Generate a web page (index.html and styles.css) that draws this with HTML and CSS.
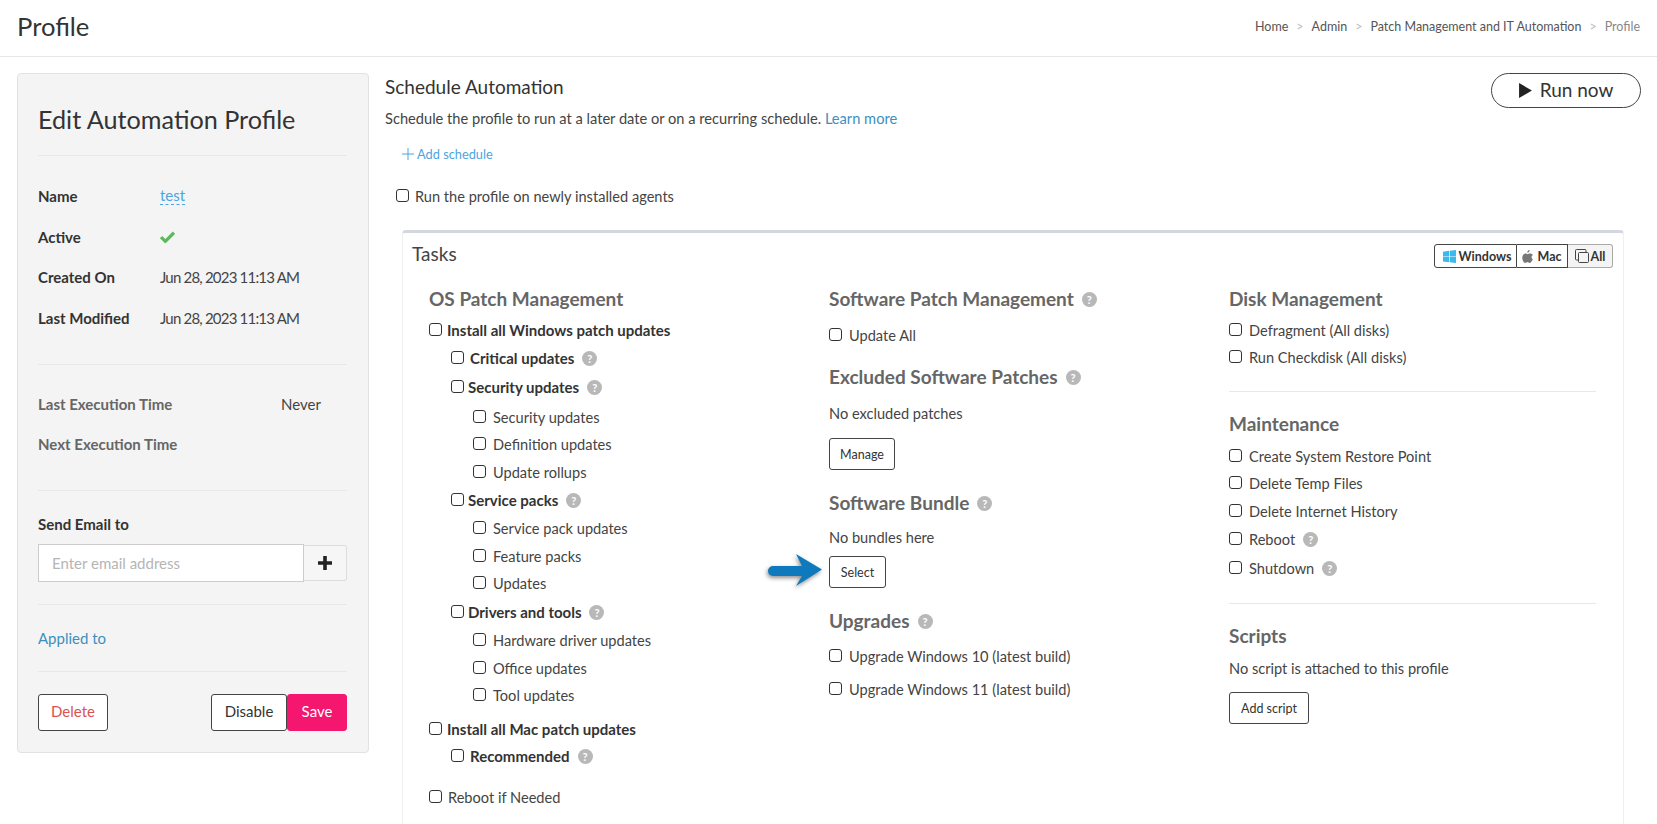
FILE: index.html
```html
<!DOCTYPE html>
<html>
    <head>
        <title>Profile</title>
        <meta charset="utf-8" />
        <link rel="stylesheet" href="styles.css">
    </head>
    <body>
        <header class="topbar">
            <h1>Profile</h1>
            <nav class="crumbs">
                <a>Home</a><span class="sep">&gt;</span>
                <a>Admin</a><span class="sep">&gt;</span>
                <a>Patch Management and IT Automation</a><span class="sep">&gt;</span>
                <span class="current">Profile</span>
            </nav>
        </header>

        <main class="layout">
            <aside class="panel">
                <h2>Edit Automation Profile</h2>
                <hr class="first-rule">
                <div class="info"><b>Name</b><a class="editable">test</a></div>
                <div class="info">
                    <b>Active</b>
                    <svg class="tick" viewBox="0 0 14 12"><path d="M1 6.5l4 4L13 2.5" fill="none" stroke="#5cb85c" stroke-width="3"/></svg>
                </div>
                <div class="info"><b>Created On</b><span class="date">Jun 28, 2023 11:13 AM</span></div>
                <div class="info"><b>Last Modified</b><span class="date">Jun 28, 2023 11:13 AM</span></div>
                <hr class="rule-exec">
                <div class="info muted"><b>Last Execution Time</b><span class="never">Never</span></div>
                <div class="info muted"><b>Next Execution Time</b></div>
                <hr class="rule-email">
                <label class="email-label">Send Email to</label>
                <div class="email-group">
                    <input type="text" placeholder="Enter email address">
                    <button class="add-btn"><svg viewBox="0 0 14 14"><path d="M5.2 0h3.6v5.2H14v3.6H8.8V14H5.2V8.8H0V5.2h5.2z" fill="#222"/></svg></button>
                </div>
                <hr class="rule-applied">
                <a class="applied">Applied to</a>
                <hr class="rule-actions">
                <div class="actions">
                    <button class="btn btn-delete">Delete</button>
                    <div class="actions-right">
                        <button class="btn btn-disable">Disable</button>
                        <button class="btn btn-save">Save</button>
                    </div>
                </div>
            </aside>

            <section class="content">
                <div class="content-head">
                    <h3>Schedule Automation</h3>
                    <button class="run-now">
                        <svg viewBox="0 0 12 14"><path d="M0 0l12 7-12 7z" fill="#222"/></svg>
                        <span>Run now</span>
                    </button>
                </div>
                <p class="lead">Schedule the profile to run at a later date or on a recurring schedule. <a>Learn more</a></p>
                <a class="add-schedule"><svg viewBox="0 0 12 12"><path d="M6 0v12M0 6h12" stroke="#4ca5e0" stroke-width="1" fill="none"/></svg>Add schedule</a>
                <label class="row new-agents"><input type="checkbox">Run the profile on newly installed agents</label>

                <div class="tasks">
                    <div class="tasks-head">
                        <h4>Tasks</h4>
                        <div class="os-filter">
                            <button class="seg seg-win">
                                <svg viewBox="0 0 12 12"><path d="M0 1.500L5.600 .8v4.900H0zM6.200 .7L12 0v5.700H6.200zM0 6.300h5.600v4.900L0 10.500zM6.200 6.300H12V12l-5.800-.7z" fill="#3bb8ee"/></svg>Windows
                            </button>
                            <button class="seg seg-mac">
                                <svg viewBox="0 0 12 14"><path d="M8.3 0c.1 1.400-1 2.800-2.500 2.900C5.700 1.500 6.900.2 8.300 0zM11.600 10.200c-.7 1.700-2 3.800-3.300 3.800-.9 0-1.300-.6-2.400-.6s-1.600.6-2.400.6C2 14 .3 10.900.3 8.300c0-2.800 1.800-4.500 3.500-4.500 1 0 1.800.7 2.400.7s1.500-.8 2.700-.7c.6 0 2.100.2 3 1.600-2.200 1.400-1.800 4 .3 4.800z" fill="#777"/></svg>Mac
                            </button>
                            <button class="seg seg-all">
                                <svg viewBox="0 0 14 14"><path d="M3.500 11H1.500A1 1 0 0 1 .5 10V1.500A1 1 0 0 1 1.500.5H10a1 1 0 0 1 1 1v2" fill="none" stroke="#444"/><rect x="3.500" y="3.500" width="10" height="10" rx="1" fill="none" stroke="#444"/></svg>All
                            </button>
                        </div>
                    </div>

                    <div class="task-columns">
                        <div class="col">
                            <h5>OS Patch Management</h5>
                            <label class="row strong first"><input type="checkbox">Install all Windows patch updates</label>
                            <label class="row strong lvl1 wide"><input type="checkbox">Critical updates<i class="help">?</i></label>
                            <label class="row strong lvl1 loose"><input type="checkbox">Security updates<i class="help">?</i></label>
                            <label class="row lvl2 looser"><input type="checkbox">Security updates</label>
                            <label class="row lvl2 tight"><input type="checkbox">Definition updates</label>
                            <label class="row lvl2"><input type="checkbox">Update rollups</label>
                            <label class="row strong lvl1"><input type="checkbox">Service packs<i class="help">?</i></label>
                            <label class="row lvl2"><input type="checkbox">Service pack updates</label>
                            <label class="row lvl2"><input type="checkbox">Feature packs</label>
                            <label class="row lvl2 tight"><input type="checkbox">Updates</label>
                            <label class="row strong lvl1 loose"><input type="checkbox">Drivers and tools<i class="help">?</i></label>
                            <label class="row lvl2"><input type="checkbox">Hardware driver updates</label>
                            <label class="row lvl2"><input type="checkbox">Office updates</label>
                            <label class="row lvl2 tight"><input type="checkbox">Tool updates</label>
                            <label class="row strong mac"><input type="checkbox">Install all Mac patch updates</label>
                            <label class="row strong lvl1 wide tight"><input type="checkbox">Recommended<i class="help">?</i></label>
                            <label class="row reboot"><input type="checkbox">Reboot if Needed</label>
                        </div>

                        <div class="col">
                            <h5>Software Patch Management<i class="help">?</i></h5>
                            <label class="row update-all"><input type="checkbox">Update All</label>
                            <h5 class="excluded">Excluded Software Patches<i class="help">?</i></h5>
                            <p class="note">No excluded patches</p>
                            <button class="small-btn btn-manage">Manage</button>
                            <h5 class="bundle">Software Bundle<i class="help">?</i></h5>
                            <p class="note note-bundle">No bundles here</p>
                            <div class="select-wrap">
                                <svg class="arrow" viewBox="0 0 60 40">
                                    <path d="M7 14H36L30 2l26 15.500L30 34l6-10H7a5 5 0 0 1 0-10z" fill="#0f79bd"/>
                                </svg>
                                <button class="small-btn">Select</button>
                            </div>
                            <h5 class="upgrades">Upgrades<i class="help">?</i></h5>
                            <label class="row win10"><input type="checkbox">Upgrade Windows 10 (latest build)</label>
                            <label class="row win11"><input type="checkbox">Upgrade Windows 11 (latest build)</label>
                        </div>

                        <div class="col">
                            <h5>Disk Management</h5>
                            <label class="row first"><input type="checkbox">Defragment (All disks)</label>
                            <label class="row tight"><input type="checkbox">Run Checkdisk (All disks)</label>
                            <hr class="col-rule">
                            <h5 class="maintenance">Maintenance</h5>
                            <label class="row maint-first"><input type="checkbox">Create System Restore Point</label>
                            <label class="row tight"><input type="checkbox">Delete Temp Files</label>
                            <label class="row"><input type="checkbox">Delete Internet History</label>
                            <label class="row"><input type="checkbox">Reboot<i class="help">?</i></label>
                            <label class="row loose"><input type="checkbox">Shutdown<i class="help">?</i></label>
                            <hr class="col-rule col-rule-low">
                            <h5 class="maintenance">Scripts</h5>
                            <p class="note note-script">No script is attached to this profile</p>
                            <button class="small-btn btn-script">Add script</button>
                        </div>
                    </div>
                </div>
            </section>
        </main>
    </body>
</html>
```

FILE: styles.css
```css
* {
    box-sizing: border-box;
}

html, body {
    height: 824px;
    overflow: hidden;
}

body {
    margin: 0;
    font-family: "Lato", "Noto Sans", sans-serif;
    font-size: 15px;
    color: #444;
    background-color: #fff;
}

a {
    color: #3d8fbf;
}

button {
    font-family: inherit;
    cursor: pointer;
}

hr {
    border: none;
    border-top: 1px solid #e8e8e8;
    margin: 0;
}

.topbar {
    height: 57px;
    border-bottom: 1px solid #e6e6e6;
    padding: 0 17px 4px 17px;
    display: flex;
    align-items: center;
    justify-content: space-between;
}

.topbar h1 {
    margin: 0;
    font-size: 25.6px;
    font-weight: 400;
    color: #333;
}

.crumbs {
    font-size: 12.5px;
    display: flex;
    align-items: center;
}

.crumbs a {
    color: #555;
}

.crumbs .sep {
    color: #bbb;
    margin: 0 8px;
}

.crumbs .current {
    color: #888;
}

.layout {
    display: flex;
    gap: 16px;
    padding: 16px 16px 0 17px;
}

.panel {
    width: 352px;
    height: 680px;
    flex-shrink: 0;
    background-color: #f4f4f4;
    border: 1px solid #e2e2e2;
    border-radius: 4px;
    padding: 28px 21px 0 20px;
}

.panel h2 {
    margin: 0;
    font-size: 25.2px;
    line-height: 34px;
    font-weight: 400;
    color: #333;
}

.first-rule {
    margin-top: 19px;
    margin-bottom: 29px;
}

.info {
    display: flex;
    align-items: center;
    height: 22px;
    margin-bottom: 18.500px;
    color: #444;
}

.info b {
    width: 122px;
    flex-shrink: 0;
    color: #333;
}

.date {
    letter-spacing: -0.8px;
}

.editable {
    color: #4ca5e0;
    border-bottom: 1px dashed #4ca5e0;
    line-height: 17px;
}

.tick {
    width: 15px;
    height: 13px;
}

.info.muted b {
    color: #666;
    width: 243px;
}

.never {
    color: #444;
}

.rule-exec {
    margin-top: 35px;
    margin-bottom: 28px;
}

.rule-email {
    margin-top: 35px;
    margin-bottom: 22px;
}

.email-label {
    display: block;
    font-weight: 700;
    color: #333;
    line-height: 22px;
}

.email-group {
    display: flex;
    height: 38px;
    margin-top: 9px;
}

.email-group input {
    width: 266px;
    border: 1px solid #ccc;
    background: #fff;
    padding: 0 13px;
    font: inherit;
}

.email-group input::placeholder {
    color: #b5b5b5;
}

.add-btn {
    flex: 1;
    margin: 1px 0;
    border: 1px solid #ddd;
    border-left: none;
    border-radius: 0 3px 3px 0;
    background: #f6f6f6;
    display: flex;
    align-items: center;
    justify-content: center;
}

.add-btn svg {
    width: 14px;
    height: 14px;
}

.rule-applied {
    margin-top: 22px;
    margin-bottom: 22px;
}

.applied {
    display: block;
    line-height: 22px;
}

.rule-actions {
    margin-top: 22px;
    margin-bottom: 22px;
}

.actions {
    display: flex;
    justify-content: space-between;
}

.actions-right {
    display: flex;
}

.btn {
    height: 37px;
    padding: 0 0 3px;
    font-size: 15px;
    border: 1px solid #444;
    border-radius: 3px;
    background: #fff;
}

.btn-delete {
    width: 70px;
    color: #d9534f;
}

.btn-disable {
    width: 76px;
    color: #333;
}

.btn-save {
    width: 60px;
    background: #f5176f;
    border-color: #f5176f;
    color: #fff;
}

.content {
    flex: 1;
}

.content-head {
    display: flex;
    justify-content: space-between;
    height: 35px;
}

.content-head h3 {
    margin: 0;
    font-size: 19px;
    line-height: 28px;
    font-weight: 400;
    color: #333;
}

.run-now {
    width: 150px;
    height: 35px;
    padding: 0;
    border: 1px solid #444;
    border-radius: 18px;
    background: #fff;
    font-size: 19px;
    color: #333;
    display: flex;
    align-items: center;
    justify-content: center;
    gap: 8px;
}

.run-now span {
    padding-bottom: 2px;
}

.run-now svg {
    width: 13px;
    height: 15px;
}

.lead {
    margin: 0;
    font-size: 14.65px;
    line-height: 22px;
}

.add-schedule {
    display: flex;
    align-items: center;
    gap: 3px;
    margin: 14px 0 0 17px;
    height: 20px;
    font-size: 12.8px;
    color: #4ca5e0;
}

.add-schedule svg {
    width: 12px;
    height: 12px;
}

.row {
    display: flex;
    align-items: center;
    height: 22px;
    margin-top: 6px;
    font-size: 14.6px;
}

.row input {
    appearance: none;
    width: 13px;
    height: 13px;
    margin: 0 7px 0 0;
    flex-shrink: 0;
    background: #fff;
    border: 1px solid #333;
    border-radius: 3px;
    position: relative;
    top: -1px;
}

.row.tight {
    margin-top: 5px;
}

.row.loose {
    margin-top: 7px;
}

.row.looser {
    margin-top: 8px;
}

.row.first {
    margin-top: 7px;
}

.row.maint-first {
    margin-top: 8px;
}

.new-agents {
    margin: 21px 0 0 11px;
}

.new-agents input {
    margin-right: 6px;
}

.tasks {
    margin: 23px 17px 0 17px;
    height: 700px;
    border: 1px solid #f0f0f0;
    border-top: 3px solid #d5d7de;
    border-radius: 4px 4px 0 0;
}

.tasks-head {
    display: flex;
    justify-content: space-between;
    height: 31px;
    margin-top: 8px;
    padding: 0 10px 0 9px;
}

.tasks-head h4 {
    margin: 0;
    font-size: 19px;
    line-height: 26px;
    font-weight: 400;
    color: #444;
}

.os-filter {
    display: flex;
    height: 24px;
    margin-top: 3px;
}

.seg {
    display: flex;
    align-items: center;
    gap: 3px;
    padding: 0;
    justify-content: center;
    height: 24px;
    font-size: 12.5px;
    font-weight: 700;
    color: #333;
    background: #fff;
    border: 1px solid #444;
}

.seg svg {
    width: 13px;
    height: 13px;
}

.seg-win {
    width: 83px;
    padding-left: 3px;
    border-radius: 3px 0 0 3px;
}

.seg-mac {
    width: 51px;
    border-left: none;
    gap: 4px;
}

.seg-mac svg {
    width: 11px;
}

.seg-all {
    width: 45px;
    gap: 2px;
    border: 1px solid #aaa;
    border-left: none;
    border-radius: 0 3px 3px 0;
    background: #f4f4f4;
}

.seg-all svg {
    width: 14px;
    height: 14px;
}

.task-columns {
    display: grid;
    grid-template-columns: 400px 400px 1fr;
    padding: 14px 27px 0 26px;
}

.col h5 {
    display: flex;
    align-items: center;
    margin: 0;
    font-size: 19px;
    line-height: 26px;
    font-weight: 700;
    color: #666;
}

.strong {
    font-size: 15px;
    font-weight: 700;
    color: #333;
}

.strong input {
    margin-right: 5px;
}

.lvl1 {
    padding-left: 22px;
}

.lvl1 input {
    margin-right: 4px;
}

.lvl1.wide input {
    margin-right: 6px;
}

.lvl2 {
    padding-left: 44px;
}

.help {
    display: inline-block;
    width: 15px;
    height: 15px;
    margin-left: 8px;
    border-radius: 50%;
    background: #b8b8b8;
    color: #fff;
    font-style: normal;
    font-size: 11px;
    font-weight: 700;
    line-height: 15px;
    text-align: center;
}

.mac {
    margin-top: 12px;
}

.reboot {
    margin-top: 19px;
}

.reboot input {
    margin-right: 6px;
}

.update-all {
    margin-top: 12px;
}

.col .excluded {
    margin-top: 18px;
}

.note {
    margin: 13px 0 0;
    font-size: 14.6px;
    line-height: 22px;
}

.small-btn {
    display: block;
    height: 32px;
    padding: 0;
    font-size: 12.5px;
    color: #333;
    background: #fff;
    border: 1px solid #444;
    border-radius: 3px;
    white-space: nowrap;
}

.btn-manage {
    margin-top: 13px;
    width: 66px;
}

.col .bundle {
    margin-top: 20px;
}

.note-bundle {
    margin-top: 11px;
}

.select-wrap {
    position: relative;
    margin-top: 7px;
}

.select-wrap .small-btn {
    width: 57px;
}

/* annotation drawn over the page in the original capture */
.arrow {
    position: absolute;
    left: -63px;
    top: -4px;
    width: 60px;
    height: 40px;
    filter: drop-shadow(-1px 2px 2px rgba(0, 0, 0, 0.45));
}

.col .upgrades {
    margin-top: 20px;
}

.win10 {
    margin-top: 11px;
}

.win11 {
    margin-top: 11px;
}

.col-rule {
    margin-top: 23px;
}

.col-rule-low {
    margin-top: 24px;
}

.col .maintenance {
    margin-top: 19px;
}

.note-script {
    margin-top: 9px;
}

.btn-script {
    margin-top: 12px;
    width: 80px;
}
```
